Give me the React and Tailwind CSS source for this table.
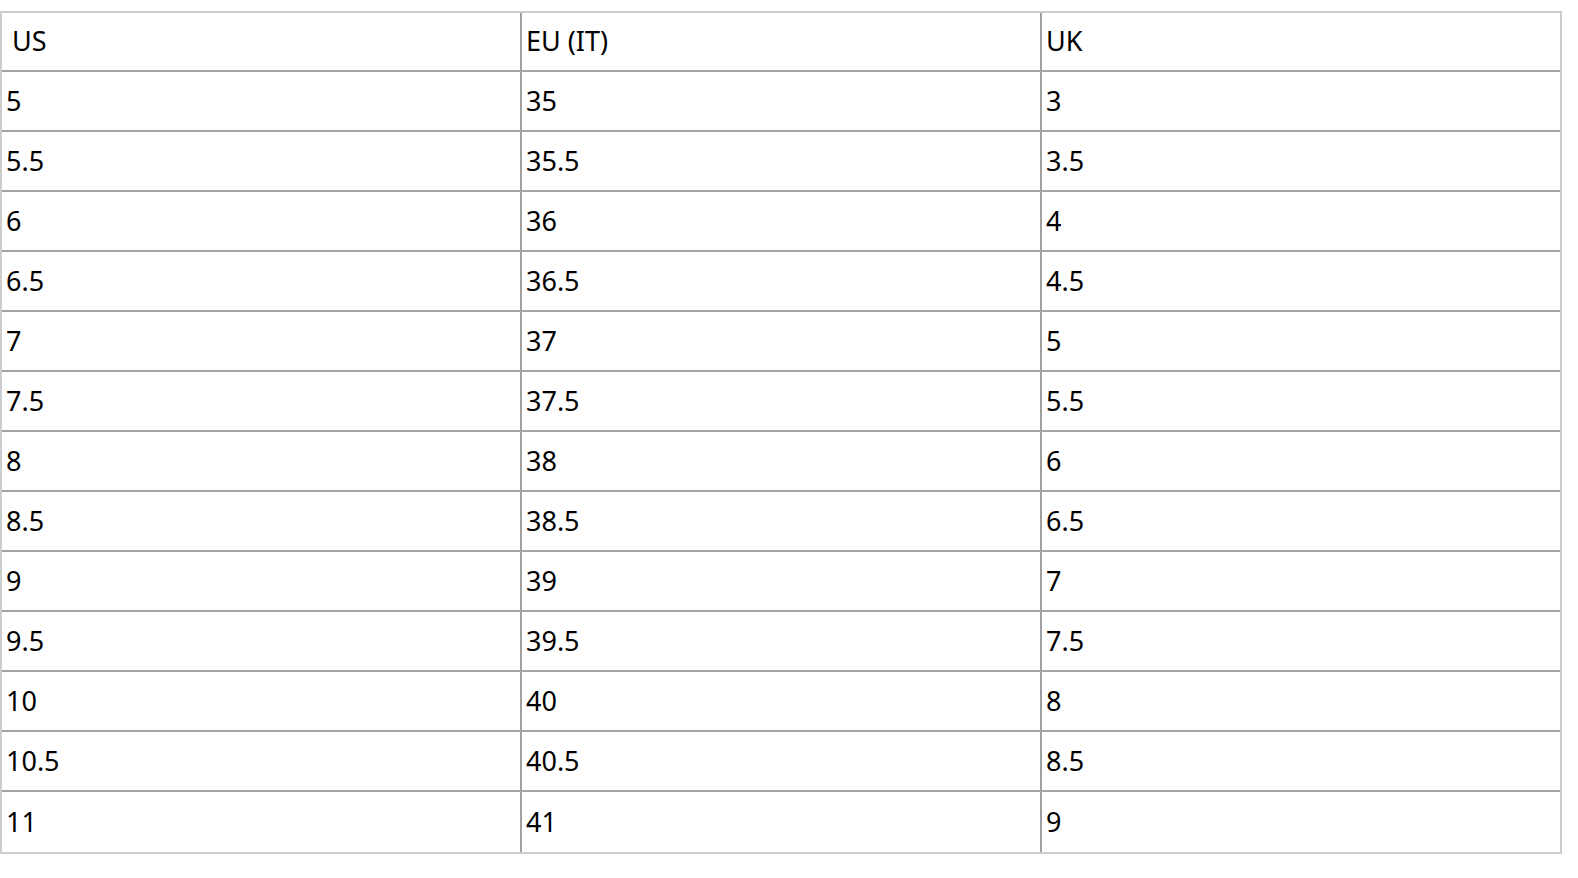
import React from "react";

const rows = [
  ["5", "35", "3"],
  ["5.5", "35.5", "3.5"],
  ["6", "36", "4"],
  ["6.5", "36.5", "4.5"],
  ["7", "37", "5"],
  ["7.5", "37.5", "5.5"],
  ["8", "38", "6"],
  ["8.5", "38.5", "6.5"],
  ["9", "39", "7"],
  ["9.5", "39.5", "7.5"],
  ["10", "40", "8"],
  ["10.5", "40.5", "8.5"],
  ["11", "41", "9"],
];

export default function App() {
  return (
    <div className="min-h-[878px] bg-white pt-[11px] text-black" style={{ fontFamily: '"Noto Sans", sans-serif' }}>
      <div className="w-[1562px] border-2 border-[#cccccc] text-[27px]">
        <div className="grid h-[59px] grid-cols-[518px_520px_520px] border-b-2 border-[#a3a3a3]">
          <div className="flex items-center pl-[10px]">US</div>
          <div className="flex items-center border-l-2 border-[#a0a0a0] pl-1">EU (IT)</div>
          <div className="flex items-center border-l-2 border-[#a0a0a0] pl-1">UK</div>
        </div>
        {rows.map((r, i) => (
          <div
            key={i}
            className={`grid h-[60px] grid-cols-[518px_520px_520px] ${i < rows.length - 1 ? "border-b-2 border-[#a3a3a3]" : ""}`}
          >
            <div className="flex items-center pl-1">{r[0]}</div>
            <div className="flex items-center border-l-2 border-[#a0a0a0] pl-1">{r[1]}</div>
            <div className="flex items-center border-l-2 border-[#a0a0a0] pl-1">{r[2]}</div>
          </div>
        ))}
      </div>
    </div>
  );
}
